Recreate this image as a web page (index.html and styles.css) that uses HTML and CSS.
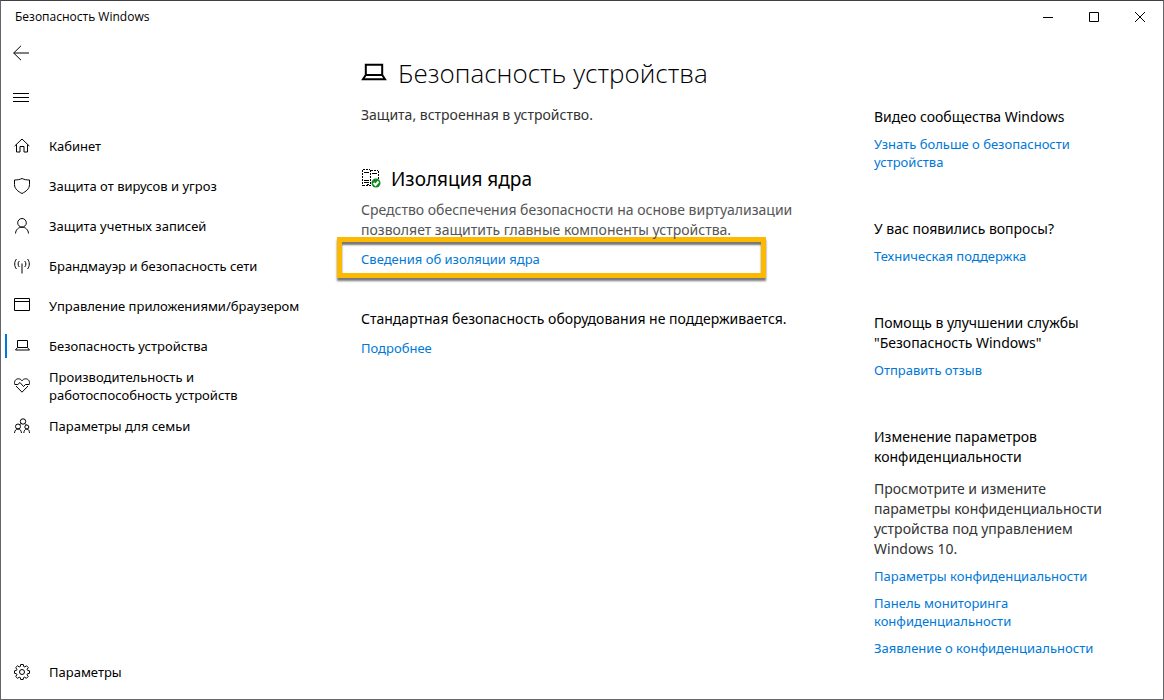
FILE: index.html
```html
<!DOCTYPE html>
<html lang="ru">
<head>
    <meta charset="UTF-8">
    <meta name="viewport" content="width=device-width, initial-scale=1">
    <title>Безопасность Windows</title>
    <link rel="stylesheet" href="styles.css">
</head>
<body>
<div class="window">
    <header class="titlebar">
        <span class="caption">Безопасность Windows</span>
        <div class="controls">
            <button type="button" aria-label="Свернуть"><svg width="10" height="10" viewBox="0 0 10 10"><path d="M0 5.5h10"/></svg></button>
            <button type="button" aria-label="Развернуть"><svg width="10" height="10" viewBox="0 0 10 10"><path d="M.5.5h9v9h-9z"/></svg></button>
            <button type="button" aria-label="Закрыть"><svg width="10" height="10" viewBox="0 0 10 10"><path d="M0 0l10 10M10 0L0 10"/></svg></button>
        </div>
    </header>

    <div class="layout">
        <nav class="sidebar">
            <button type="button" class="icon-btn" aria-label="Назад"><svg width="16" height="16" viewBox="0 0 16 16"><path d="M.7 8H16M8 .8L.7 8 8 15.2"/></svg></button>
            <button type="button" class="icon-btn" aria-label="Меню"><svg width="16" height="16" viewBox="0 0 16 16"><path d="M0 4.5h16M0 8.5h16M0 12.5h16"/></svg></button>

            <ul class="menu">
                <li><a href="#home">
                    <svg width="16" height="16" viewBox="0 0 16 16"><path d="M.7 8L8 1l7.300 7M2.500 6.500v7.500h3.500V8.500h4V14h3.500V6.500"/></svg>
                    <span>Кабинет</span></a></li>
                <li><a href="#virus">
                    <svg width="16" height="16" viewBox="0 0 16 16"><path d="M8 .5C6 1.500 3.500 2 .5 2v4.500c0 4.300 3.500 7 7.500 9 4-2 7.500-4.700 7.500-9V2C12.500 2 10 1.500 8 .5z"/></svg>
                    <span>Защита от вирусов и угроз</span></a></li>
                <li><a href="#account">
                    <svg width="16" height="16" viewBox="0 0 16 16"><circle cx="8" cy="4.800" r="4.300"/><path d="M1.500 15.500C1.800 11.500 4.500 9.200 8 9.200s6.200 2.300 6.500 6.300"/></svg>
                    <span>Защита учетных записей</span></a></li>
                <li><a href="#firewall">
                    <svg width="16" height="16" viewBox="0 0 16 16"><path d="M8 5.500V15.500M2.500 1C.1 3.700.1 8.300 2.500 11M13.500 1c2.400 2.700 2.400 7.300 0 10M5.300 3C3.700 4.700 3.700 7.300 5.300 9M10.700 3c1.600 1.700 1.600 4.300 0 6"/></svg>
                    <span>Брандмауэр и безопасность сети</span></a></li>
                <li><a href="#apps">
                    <svg width="16" height="16" viewBox="0 0 16 16"><path d="M.5.5h15v12H.5zM.5 3.500h15"/></svg>
                    <span>Управление приложениями/браузером</span></a></li>
                <li><a href="#device" class="active">
                    <svg width="16" height="16" viewBox="0 0 16 16"><path d="M3.500 9.500v-7h10v7M3.500 9.500h10l2 2.500H1.500z"/></svg>
                    <span>Безопасность устройства</span></a></li>
                <li><a href="#health">
                    <svg width="16" height="16" viewBox="0 0 16 16"><path d="M.8 6.500C-.2 3.500 1.500.8 4.300.8 6 .8 7.200 1.600 8 2.800 8.800 1.600 10 .8 11.700.8c2.800 0 4.500 2.700 3.500 5.700M2 8l6 6.200L14 8M.8 6.500h3L6 4.500l3.500 4 2-2h3.700"/></svg>
                    <span>Производительность и работоспособность устройств</span></a></li>
                <li><a href="#family">
                    <svg width="16" height="16" viewBox="0 0 16 16"><circle cx="9" cy="3.500" r="2.700"/><circle cx="4" cy="8.500" r="2.500"/><circle cx="12.800" cy="9" r="2"/><path d="M.5 15c.2-2.500 1.500-4 3.500-4s3.300 1.500 3.500 4M9.800 15c.2-2.300 1.300-4 3-4s2.600 1.700 2.700 4M5.500 6.500L7.300 5.500M11 5.500l1.500 1.500"/></svg>
                    <span>Параметры для семьи</span></a></li>
            </ul>

            <ul class="menu menu-bottom">
                <li><a href="#settings">
                    <svg width="16" height="16" viewBox="0 0 16 16"><circle cx="8" cy="8" r="2.500"/><path d="M6.700.5h2.600l.4 2 1.100.4 1.700-1.100 1.800 1.800-1.200 1.700.5 1.100 1.900.4v2.500l-2 .4-.4 1.100 1.100 1.700-1.800 1.800-1.700-1.100-1.100.4-.4 1.900H6.700l-.4-1.900-1.100-.4-1.700 1.100-1.800-1.800 1.200-1.700-.5-1.100-1.900-.4V6.800l2-.4.4-1.100-1.200-1.700 1.800-1.800 1.700 1.100 1.100-.4z"/></svg>
                    <span>Параметры</span></a></li>
            </ul>
        </nav>

        <main class="content">
            <h1>
                <svg width="26" height="26" viewBox="0 0 26 26"><path d="M4.800 15V4.800h16.400V15M4.800 15h16.400l2.800 4.200H2z"/></svg>
                Безопасность устройства
            </h1>
            <p class="lead">Защита, встроенная в устройство.</p>

            <section class="isolation">
                <h2>
                    <svg class="chip" width="20" height="20" viewBox="0 0 20 20">
                        <path class="dots" d="M1.500 1v16M9.500 1v16M17.500 2v8M2 .5h7M10 1.500h7M2 16.500h7"/>
                        <path d="M3 3.500h5M11 4.500h5M3 11.500h5M3 13.500h5M6 15.500h2"/>
                        <circle class="ok" cx="15" cy="14" r="4.500"/>
                        <path class="tick" d="M12.500 14l2 2 3-3.500"/>
                    </svg>
                    Изоляция ядра
                </h2>
                <p class="desc">Средство обеспечения безопасности на основе виртуализации позволяет защитить главные компоненты устройства.</p>
                <div class="highlight"><a href="#core">Сведения об изоляции ядра</a></div>
            </section>

            <section>
                <p class="status">Стандартная безопасность оборудования не поддерживается.</p>
                <a href="#more">Подробнее</a>
            </section>
        </main>

        <aside class="help">
            <section>
                <h3>Видео сообщества Windows</h3>
                <a href="#learn">Узнать больше о безопасности устройства</a>
            </section>
            <section>
                <h3>У вас появились вопросы?</h3>
                <a href="#support">Техническая поддержка</a>
            </section>
            <section>
                <h3>Помощь в улучшении службы "Безопасность Windows"</h3>
                <a href="#feedback">Отправить отзыв</a>
            </section>
            <section>
                <h3>Изменение параметров конфиденциальности</h3>
                <p>Просмотрите и измените параметры конфиденциальности устройства под управлением Windows 10.</p>
                <a href="#privacy">Параметры конфиденциальности</a>
                <a href="#dashboard">Панель мониторинга конфиденциальности</a>
                <a href="#statement">Заявление о конфиденциальности</a>
            </section>
        </aside>
    </div>
</div>
</body>
</html>
```
FILE: styles.css
```css
* { box-sizing: border-box; margin: 0; padding: 0; }
body {
    font-family: "Noto Sans", "Open Sans", sans-serif;
    font-size: 13px;
    line-height: 18px;
    color: #000;
    background: #fff;
}
a { color: #0078d7; text-decoration: none; }
a:hover { color: #666; }
ul { list-style: none; }
button { border: 0; background: transparent; }
svg { flex: none; fill: none; stroke: #000; stroke-width: 1; }
h1, h2, h3 { font-weight: normal; }

.window {
    display: flex;
    flex-direction: column;
    min-height: 100vh;
    border: 1px solid #66666a;
    border-top-color: #404147;
}

.titlebar {
    display: flex;
    justify-content: space-between;
    align-items: center;
    height: 32px;
    padding-left: 14px;
    font-family: "Open Sans", "Noto Sans", sans-serif;
    font-size: 12px;
}
.controls { display: flex; }
.controls button {
    display: flex;
    align-items: center;
    justify-content: center;
    width: 46px;
    height: 32px;
}
.controls button:hover { background: #e5e5e5; }

.layout {
    flex: 1;
    display: grid;
    grid-template-columns: 360px minmax(0, 1fr) 289px;
}

/* left menu */
.sidebar { display: flex; flex-direction: column; }
.icon-btn {
    display: flex;
    align-items: center;
    width: 48px;
    height: 40px;
    padding-left: 12px;
    margin-bottom: 4px;
}
.menu { margin-top: 5px; }
.menu a {
    display: flex;
    align-items: center;
    gap: 19px;
    width: 320px;
    height: 40px;
    padding-left: 13px;
    color: #000;
}
.menu a:hover { background: #f2f2f2; }
.menu span { max-width: 270px; }
.menu a[href="#health"] span { max-width: 210px; }
.menu .active::before {
    content: "";
    width: 2px;
    height: 24px;
    margin: 0 -12px 0 -9px;
    background: #0078d7;
}
.menu-bottom { margin-top: auto; padding-bottom: 7px; }

/* middle column */
.content { padding-top: 20px; }
h1 {
    display: flex;
    align-items: center;
    gap: 11px;
    font-family: "Open Sans", "Noto Sans", sans-serif;
    font-size: 26px;
    font-weight: 300;
    line-height: 40px;
}
h1 svg { stroke-width: 2; }
.lead {
    margin-top: 12px;
    font-size: 14px;
    line-height: 20px;
    color: #333;
}
.isolation { margin: 42px 0 31px; }
h2 {
    display: flex;
    align-items: center;
    gap: 10px;
    font-size: 19px;
    line-height: 24px;
}
.chip .dots { stroke-dasharray: 2 1; }
.chip .ok { fill: #10891e; stroke: none; }
.chip .tick { stroke: #fff; stroke-width: 2; }
.desc {
    max-width: 450px;
    margin-top: 9px;
    font-size: 14px;
    line-height: 20px;
    color: #555;
}
.highlight {
    width: 429px;
    max-width: 100%;
    margin: -3px 0 0 -24px;
    padding: 8px 19px 5px;
    border: 5px solid #fdb900;
    box-shadow: 0 3px 2px #777, inset 0 3px 2px #777;
}
.status {
    margin-bottom: 10px;
    font-size: 14px;
    line-height: 20px;
}

/* right column */
.help {
    display: flex;
    flex-direction: column;
    gap: 48px;
    padding: 74px 40px 40px 0;
}
.help h3, .help p {
    font-size: 14px;
    line-height: 20px;
}
.help h3 { margin-bottom: 8px; }
.help p { margin: 12px 0 8px; color: #333; }
.help a { display: block; margin-bottom: 9px; }
.help a:last-child { margin-bottom: 0; }
```
